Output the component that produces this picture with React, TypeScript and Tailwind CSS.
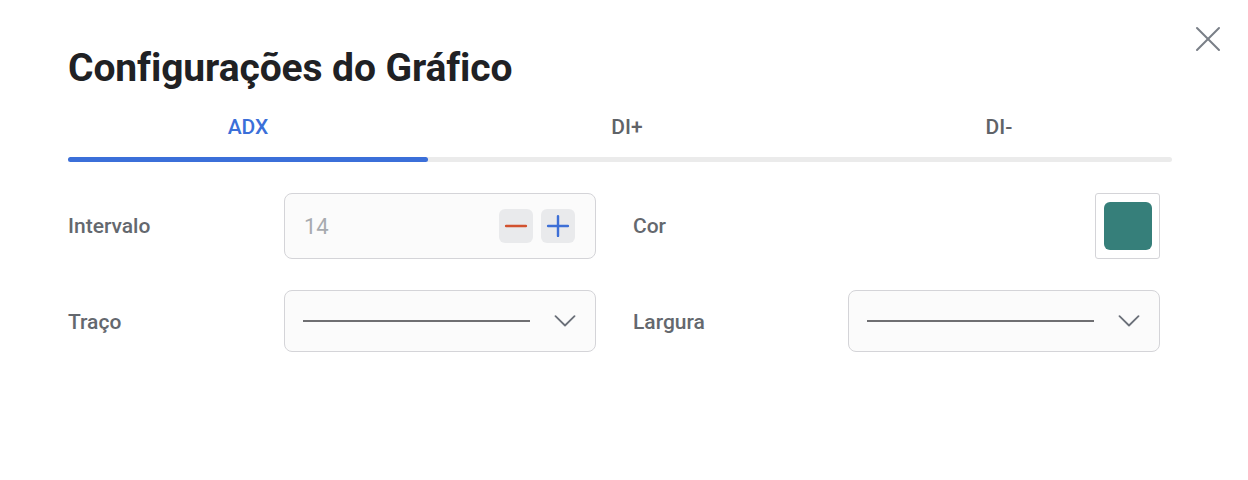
import { X, Minus, Plus } from 'lucide-react'

const tabs = [
  { label: 'ADX', w: 'w-[360px]' },
  { label: 'DI+', w: 'w-[398px]' },
  { label: 'DI-', w: 'w-[346px]' },
]

function Chevron() {
  return (
    <svg width="22" height="12" viewBox="0 0 22 12" fill="none" className="ml-auto text-[#6b7079]">
      <path d="M1.5 1.2 L11 10.5 L20.5 1.2" stroke="currentColor" strokeWidth="1.8" strokeLinecap="round" strokeLinejoin="round" />
    </svg>
  )
}

function LineSelect() {
  return (
    <div className="flex h-[62px] w-[312px] items-center rounded-lg border border-[#d4d4d8] bg-[#fbfbfb] pl-[18px] pr-[19px]">
      <div className="h-[2px] w-[227px] bg-[#6f6f72]" />
      <Chevron />
    </div>
  )
}

export default function App() {
  const active = 0
  return (
    <div
      className="relative h-[480px] w-[1248px] bg-white px-[68px] pt-[44px]"
      style={{ fontFamily: 'Roboto, "Liberation Sans", sans-serif' }}
    >
      <button className="absolute right-[18px] top-[17px] text-[#7a7f87]" aria-label="Fechar">
        <X size={44} strokeWidth={1.1} />
      </button>

      <h1 className="text-[39px] font-bold leading-[48px] tracking-[-0.1px] text-[#202124]">
        Configurações do Gráfico
      </h1>

      <div className="mt-[16px] w-[1104px]">
        <div className="flex">
          {tabs.map((t, i) => (
            <div
              key={t.label}
              className={`${t.w} flex h-[40px] items-center justify-center text-[21px] font-medium ${
                i === active ? 'text-[#3b6fd9]' : 'text-[#5f6368]'
              }`}
            >
              {t.label}
            </div>
          ))}
        </div>
        <div className="mt-[9px] h-[5px] w-full rounded-full bg-[#ebebeb]">
          <div className="h-[5px] w-[360px] rounded-full bg-[#3b6fd9]" />
        </div>
      </div>

      <div className="mt-[31px] flex flex-col gap-[31px] text-[21px] font-medium text-[#64686e]">
        <div className="flex items-center">
          <div className="w-[216px] pt-[2px]">Intervalo</div>
          <div className="flex h-[66px] w-[312px] items-center rounded-lg border border-[#d4d4d8] bg-[#fbfbfb] pl-[19px] pr-[20px]">
            <span className="pt-[1px] text-[22px] font-normal text-[#a7aaaf]">14</span>
            <div className="ml-auto flex gap-[8px]">
              <button className="flex h-[34px] w-[34px] items-center justify-center rounded-md bg-[#e9eaec] text-[#d2522f]">
                <Minus size={34} strokeWidth={1.7} />
              </button>
              <button className="flex h-[34px] w-[34px] items-center justify-center rounded-md bg-[#e9eaec] text-[#3d6fd6]">
                <Plus size={34} strokeWidth={1.7} />
              </button>
            </div>
          </div>
          <div className="ml-[37px] w-[215px] pt-[2px]">Cor</div>
          <div className="ml-auto mr-[20px] flex h-[66px] w-[65px] items-center justify-center rounded-[3px] border border-[#d4d4d8] bg-white">
            <div className="h-[48px] w-[48px] rounded-md bg-[#367f7a]" />
          </div>
        </div>

        <div className="flex items-center">
          <div className="w-[216px] pt-[3px]">Traço</div>
          <LineSelect />
          <div className="ml-[37px] w-[215px] pt-[3px]">Largura</div>
          <LineSelect />
        </div>
      </div>
    </div>
  )
}
